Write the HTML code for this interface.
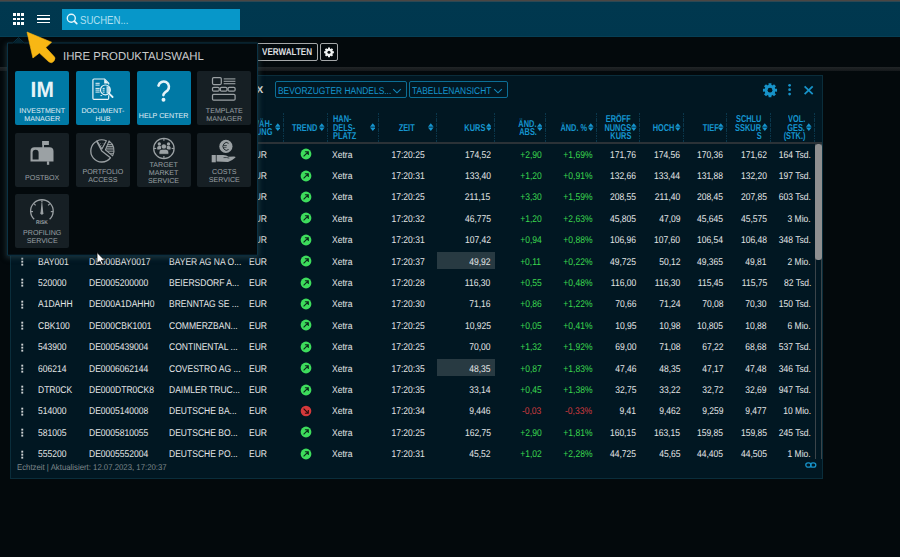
<!DOCTYPE html><html><head><meta charset="utf-8"><style>

html,body{margin:0;padding:0;}
body{width:900px;height:557px;overflow:hidden;position:relative;background:#03090c;font-family:"Liberation Sans",sans-serif;text-rendering:geometricPrecision;}
.ab{position:absolute;}
.t{position:absolute;white-space:nowrap;}
.s{display:inline-block;}
.row .t{color:#e4e6e7;font-size:9.8px;}
.hd{position:absolute;color:#1595cf;font-weight:bold;font-size:10px;white-space:nowrap;}
.tile{position:absolute;width:54px;height:54px;border-radius:2px;}
.tb{background:#0079a5;}
.tg{background:#161f24;}
.tl{position:absolute;left:0;width:54px;text-align:center;font-size:7.1px;line-height:7.8px;white-space:nowrap;}
.tb .tl{color:#e2f0f6;}
.tg .tl{color:#9ba1a4;}

</style></head><body>
<div class="ab" style="left:0;top:0;width:900px;height:37px;background:linear-gradient(#4a4643 0px,#4a4643 1px,#2c4854 1.5px,#00384f 2.5px,#00374e 100%);"></div>
<div class="ab" style="left:0;top:36px;width:900px;height:1px;background:#063f55;"></div>
<div class="ab" style="left:13.1px;top:13.3px;width:2.7px;height:2.6px;background:#fff;"></div>
<div class="ab" style="left:17.25px;top:13.3px;width:2.7px;height:2.6px;background:#fff;"></div>
<div class="ab" style="left:21.4px;top:13.3px;width:2.7px;height:2.6px;background:#fff;"></div>
<div class="ab" style="left:13.1px;top:17.65px;width:2.7px;height:2.6px;background:#fff;"></div>
<div class="ab" style="left:17.25px;top:17.65px;width:2.7px;height:2.6px;background:#fff;"></div>
<div class="ab" style="left:21.4px;top:17.65px;width:2.7px;height:2.6px;background:#fff;"></div>
<div class="ab" style="left:13.1px;top:22.0px;width:2.7px;height:2.6px;background:#fff;"></div>
<div class="ab" style="left:17.25px;top:22.0px;width:2.7px;height:2.6px;background:#fff;"></div>
<div class="ab" style="left:21.4px;top:22.0px;width:2.7px;height:2.6px;background:#fff;"></div>
<div class="ab" style="left:36.9px;top:14.9px;width:13.2px;height:1.55px;background:#fff;"></div>
<div class="ab" style="left:36.9px;top:18.4px;width:13.2px;height:1.55px;background:#fff;"></div>
<div class="ab" style="left:36.9px;top:21.9px;width:13.2px;height:1.55px;background:#fff;"></div>
<div class="ab" style="left:62px;top:9px;width:178px;height:21px;background:#0797c9;"></div>
<svg class="ab" style="left:65px;top:12px" width="14" height="14" viewBox="0 0 14 14"><circle cx="6.3" cy="6.2" r="4" fill="none" stroke="#e8f6fb" stroke-width="1.4"/><line x1="9.3" y1="9.2" x2="11.8" y2="11.7" stroke="#e8f6fb" stroke-width="1.7" stroke-linecap="round"/></svg>
<div class="t" style="left:80.4px;top:14.3px;font-size:11.6px;line-height:13px;color:#b0e0f2;"><span class="s" style="transform:scaleX(.825);transform-origin:left">SUCHEN...</span></div>
<div class="ab" style="left:0;top:66.5px;width:900px;height:4.5px;background:linear-gradient(#212527,#15191c);"></div>
<div class="ab" style="left:240px;top:43.3px;width:78.3px;height:17.5px;box-sizing:border-box;border:1.2px solid #a4a7a8;border-radius:2px;"></div>
<div class="t" style="left:262px;top:46.3px;font-size:10px;line-height:14px;font-weight:bold;color:#dcdfe0;"><span class="s" style="transform:scaleX(.81);transform-origin:left">VERWALTEN</span></div>
<div class="ab" style="left:320.3px;top:43.3px;width:17.5px;height:17.5px;box-sizing:border-box;border:1.2px solid #a4a7a8;border-radius:2px;"></div>
<svg class="ab" style="left:320.3px;top:43.3px" width="18" height="18" viewBox="0 0 18 18"><path d="M12.57,8.33 L13.90,8.30 L13.90,10.30 L12.57,10.27 L12.21,11.14 L13.17,12.06 L11.76,13.47 L10.84,12.51 L9.97,12.87 L10.00,14.20 L8.00,14.20 L8.03,12.87 L7.16,12.51 L6.24,13.47 L4.83,12.06 L5.79,11.14 L5.43,10.27 L4.10,10.30 L4.10,8.30 L5.43,8.33 L5.79,7.46 L4.83,6.54 L6.24,5.13 L7.16,6.09 L8.03,5.73 L8.00,4.40 L10.00,4.40 L9.97,5.73 L10.84,6.09 L11.76,5.13 L13.17,6.54 L12.21,7.46Z" fill="#f2f4f4"/><circle cx="9.0" cy="9.3" r="3.626" fill="#f2f4f4"/><circle cx="9.0" cy="9.3" r="1.55" fill="#03090c"/></svg>
<div class="ab" style="left:10px;top:75px;width:813px;height:404px;box-sizing:border-box;border:1px solid #0a2d3b;background:#011722;"></div>
<div class="t" style="left:242px;top:83.7px;font-size:10px;line-height:14px;font-weight:bold;color:#e9ecec;">DAX</div>
<div class="ab" style="left:275px;top:81.1px;width:131.7px;height:17.3px;box-sizing:border-box;border:1px solid #0c6e95;border-radius:2px;"></div>
<div class="t" style="left:278.1px;top:85.7px;font-size:9.8px;line-height:12px;color:#1595cf;"><span class="s" style="transform:scaleX(0.86);transform-origin:left">BEVORZUGTER HANDELS...</span></div>
<svg class="ab" style="left:392.2px;top:87px" width="10" height="8" viewBox="0 0 10 8"><polyline points="1.2,2.2 5,5.8 8.8,2.2" fill="none" stroke="#1288bd" stroke-width="1.15"/></svg>
<div class="ab" style="left:409.2px;top:81.1px;width:98.6px;height:17.3px;box-sizing:border-box;border:1px solid #0c6e95;border-radius:2px;"></div>
<div class="t" style="left:412.3px;top:85.7px;font-size:9.8px;line-height:12px;color:#1595cf;"><span class="s" style="transform:scaleX(0.86);transform-origin:left">TABELLENANSICHT</span></div>
<svg class="ab" style="left:493.29999999999995px;top:87px" width="10" height="8" viewBox="0 0 10 8"><polyline points="1.2,2.2 5,5.8 8.8,2.2" fill="none" stroke="#1288bd" stroke-width="1.15"/></svg>
<svg class="ab" style="left:760px;top:81px" width="20" height="18" viewBox="0 0 20 18"><path d="M15.21,7.78 L17.05,7.76 L17.05,10.64 L15.21,10.62 L14.69,11.88 L16.01,13.17 L13.97,15.21 L12.68,13.89 L11.42,14.41 L11.44,16.25 L8.56,16.25 L8.58,14.41 L7.32,13.89 L6.03,15.21 L3.99,13.17 L5.31,11.88 L4.79,10.62 L2.95,10.64 L2.95,7.76 L4.79,7.78 L5.31,6.52 L3.99,5.23 L6.03,3.19 L7.32,4.51 L8.58,3.99 L8.56,2.15 L11.44,2.15 L11.42,3.99 L12.68,4.51 L13.97,3.19 L16.01,5.23 L14.69,6.52Z" fill="#1793c9"/><circle cx="10" cy="9.2" r="5.292" fill="#1793c9"/><circle cx="10" cy="9.2" r="2.4" fill="#01161f"/></svg>
<svg class="ab" style="left:786px;top:82px" width="8" height="16" viewBox="0 0 8 16"><circle cx="3.6" cy="3.3" r="1.35" fill="#1793c9"/><circle cx="3.6" cy="7.7" r="1.35" fill="#1793c9"/><circle cx="3.6" cy="12.1" r="1.35" fill="#1793c9"/></svg>
<svg class="ab" style="left:803px;top:84.5px" width="12" height="11" viewBox="0 0 12 11"><line x1="1.6" y1="1.3" x2="9.7" y2="9.1" stroke="#1793c9" stroke-width="1.8"/><line x1="9.7" y1="1.3" x2="1.6" y2="9.1" stroke="#1793c9" stroke-width="1.8"/></svg>
<div class="ab" style="left:29.5px;top:112.5px;width:1px;height:30px;background:repeating-linear-gradient(#0a374c 0 1.5px,transparent 1.5px 2.5px);"></div>
<div class="ab" style="left:83.5px;top:112.5px;width:1px;height:30px;background:repeating-linear-gradient(#0a374c 0 1.5px,transparent 1.5px 2.5px);"></div>
<div class="ab" style="left:164.5px;top:112.5px;width:1px;height:30px;background:repeating-linear-gradient(#0a374c 0 1.5px,transparent 1.5px 2.5px);"></div>
<div class="ab" style="left:244.5px;top:112.5px;width:1px;height:30px;background:repeating-linear-gradient(#0a374c 0 1.5px,transparent 1.5px 2.5px);"></div>
<div class="ab" style="left:282.8px;top:112.5px;width:1px;height:30px;background:repeating-linear-gradient(#0a374c 0 1.5px,transparent 1.5px 2.5px);"></div>
<div class="ab" style="left:327.0px;top:112.5px;width:1px;height:30px;background:repeating-linear-gradient(#0a374c 0 1.5px,transparent 1.5px 2.5px);"></div>
<div class="ab" style="left:377.8px;top:112.5px;width:1px;height:30px;background:repeating-linear-gradient(#0a374c 0 1.5px,transparent 1.5px 2.5px);"></div>
<div class="ab" style="left:436.2px;top:112.5px;width:1px;height:30px;background:repeating-linear-gradient(#0a374c 0 1.5px,transparent 1.5px 2.5px);"></div>
<div class="ab" style="left:493.7px;top:112.5px;width:1px;height:30px;background:repeating-linear-gradient(#0a374c 0 1.5px,transparent 1.5px 2.5px);"></div>
<div class="ab" style="left:544.8px;top:112.5px;width:1px;height:30px;background:repeating-linear-gradient(#0a374c 0 1.5px,transparent 1.5px 2.5px);"></div>
<div class="ab" style="left:596.1px;top:112.5px;width:1px;height:30px;background:repeating-linear-gradient(#0a374c 0 1.5px,transparent 1.5px 2.5px);"></div>
<div class="ab" style="left:639.0px;top:112.5px;width:1px;height:30px;background:repeating-linear-gradient(#0a374c 0 1.5px,transparent 1.5px 2.5px);"></div>
<div class="ab" style="left:683.2px;top:112.5px;width:1px;height:30px;background:repeating-linear-gradient(#0a374c 0 1.5px,transparent 1.5px 2.5px);"></div>
<div class="ab" style="left:726.1px;top:112.5px;width:1px;height:30px;background:repeating-linear-gradient(#0a374c 0 1.5px,transparent 1.5px 2.5px);"></div>
<div class="ab" style="left:770.0px;top:112.5px;width:1px;height:30px;background:repeating-linear-gradient(#0a374c 0 1.5px,transparent 1.5px 2.5px);"></div>
<div class="ab" style="left:814.3px;top:112.5px;width:1px;height:30px;background:repeating-linear-gradient(#0a374c 0 1.5px,transparent 1.5px 2.5px);"></div>
<div class="ab" style="left:11px;top:142.2px;width:811px;height:1.8px;background:#2b3237;"></div>
<svg class="ab" style="left:274.8px;top:122.8px" width="5.6" height="8.4" viewBox="0 0 5.6 8.4"><polygon points="0,3.7 2.8,0.3 5.6,3.7" fill="#1595cf"/><polygon points="0,4.6 2.8,8 5.6,4.6" fill="#1595cf"/></svg>
<svg class="ab" style="left:319.0px;top:122.8px" width="5.6" height="8.4" viewBox="0 0 5.6 8.4"><polygon points="0,3.7 2.8,0.3 5.6,3.7" fill="#1595cf"/><polygon points="0,4.6 2.8,8 5.6,4.6" fill="#1595cf"/></svg>
<svg class="ab" style="left:369.8px;top:122.8px" width="5.6" height="8.4" viewBox="0 0 5.6 8.4"><polygon points="0,3.7 2.8,0.3 5.6,3.7" fill="#1595cf"/><polygon points="0,4.6 2.8,8 5.6,4.6" fill="#1595cf"/></svg>
<svg class="ab" style="left:428.2px;top:122.8px" width="5.6" height="8.4" viewBox="0 0 5.6 8.4"><polygon points="0,3.7 2.8,0.3 5.6,3.7" fill="#1595cf"/><polygon points="0,4.6 2.8,8 5.6,4.6" fill="#1595cf"/></svg>
<svg class="ab" style="left:485.7px;top:122.8px" width="5.6" height="8.4" viewBox="0 0 5.6 8.4"><polygon points="0,3.7 2.8,0.3 5.6,3.7" fill="#1595cf"/><polygon points="0,4.6 2.8,8 5.6,4.6" fill="#1595cf"/></svg>
<svg class="ab" style="left:536.8px;top:122.8px" width="5.6" height="8.4" viewBox="0 0 5.6 8.4"><polygon points="0,3.7 2.8,0.3 5.6,3.7" fill="#1595cf"/><polygon points="0,4.6 2.8,8 5.6,4.6" fill="#1595cf"/></svg>
<svg class="ab" style="left:588.1px;top:122.8px" width="5.6" height="8.4" viewBox="0 0 5.6 8.4"><polygon points="0,3.7 2.8,0.3 5.6,3.7" fill="#1595cf"/><polygon points="0,4.6 2.8,8 5.6,4.6" fill="#1595cf"/></svg>
<svg class="ab" style="left:631.0px;top:122.8px" width="5.6" height="8.4" viewBox="0 0 5.6 8.4"><polygon points="0,3.7 2.8,0.3 5.6,3.7" fill="#1595cf"/><polygon points="0,4.6 2.8,8 5.6,4.6" fill="#1595cf"/></svg>
<svg class="ab" style="left:675.2px;top:122.8px" width="5.6" height="8.4" viewBox="0 0 5.6 8.4"><polygon points="0,3.7 2.8,0.3 5.6,3.7" fill="#1595cf"/><polygon points="0,4.6 2.8,8 5.6,4.6" fill="#1595cf"/></svg>
<svg class="ab" style="left:718.1px;top:122.8px" width="5.6" height="8.4" viewBox="0 0 5.6 8.4"><polygon points="0,3.7 2.8,0.3 5.6,3.7" fill="#1595cf"/><polygon points="0,4.6 2.8,8 5.6,4.6" fill="#1595cf"/></svg>
<svg class="ab" style="left:762.0px;top:122.8px" width="5.6" height="8.4" viewBox="0 0 5.6 8.4"><polygon points="0,3.7 2.8,0.3 5.6,3.7" fill="#1595cf"/><polygon points="0,4.6 2.8,8 5.6,4.6" fill="#1595cf"/></svg>
<svg class="ab" style="left:806.3px;top:122.8px" width="5.6" height="8.4" viewBox="0 0 5.6 8.4"><polygon points="0,3.7 2.8,0.3 5.6,3.7" fill="#1595cf"/><polygon points="0,4.6 2.8,8 5.6,4.6" fill="#1595cf"/></svg>
<div class="hd" style="left:38px;top:122.85px;line-height:12px;"><span class="s" style="transform:scaleX(0.74);transform-origin:left">SYMBOL</span></div>
<div class="hd" style="left:88.7px;top:122.85px;line-height:12px;"><span class="s" style="transform:scaleX(0.74);transform-origin:left">ISIN</span></div>
<div class="hd" style="left:169px;top:122.85px;line-height:12px;"><span class="s" style="transform:scaleX(0.74);transform-origin:left">NAME</span></div>
<div class="hd" style="left:72.20000000000002px;width:200px;text-align:right;top:118.55px;line-height:12px;"><span class="s" style="transform:scaleX(0.74);transform-origin:right">WÄH-</span></div>
<div class="hd" style="left:72.20000000000002px;width:200px;text-align:right;top:127.14999999999999px;line-height:12px;"><span class="s" style="transform:scaleX(0.74);transform-origin:right">RUNG</span></div>
<div class="hd" style="left:117.20000000000002px;width:200px;text-align:right;top:122.85px;line-height:12px;"><span class="s" style="transform:scaleX(0.74);transform-origin:right">TREND</span></div>
<div class="hd" style="left:332.5px;top:114.25px;line-height:12px;"><span class="s" style="transform:scaleX(0.74);transform-origin:left">HAN-</span></div>
<div class="hd" style="left:332.5px;top:122.85px;line-height:12px;"><span class="s" style="transform:scaleX(0.74);transform-origin:left">DELS-</span></div>
<div class="hd" style="left:332.5px;top:131.45000000000002px;line-height:12px;"><span class="s" style="transform:scaleX(0.74);transform-origin:left">PLATZ</span></div>
<div class="hd" style="left:214.70000000000002px;width:200px;text-align:right;top:122.85px;line-height:12px;"><span class="s" style="transform:scaleX(0.74);transform-origin:right">ZEIT</span></div>
<div class="hd" style="left:285.1px;width:200px;text-align:right;top:122.85px;line-height:12px;"><span class="s" style="transform:scaleX(0.74);transform-origin:right">KURS</span></div>
<div class="hd" style="left:336.79999999999995px;width:200px;text-align:right;top:118.55px;line-height:12px;"><span class="s" style="transform:scaleX(0.74);transform-origin:right">ÄND.</span></div>
<div class="hd" style="left:336.79999999999995px;width:200px;text-align:right;top:127.14999999999999px;line-height:12px;"><span class="s" style="transform:scaleX(0.74);transform-origin:right">ABS.</span></div>
<div class="hd" style="left:387.4px;width:200px;text-align:right;top:122.85px;line-height:12px;"><span class="s" style="transform:scaleX(0.74);transform-origin:right">ÄND. %</span></div>
<div class="hd" style="left:431.0px;width:200px;text-align:right;top:114.25px;line-height:12px;"><span class="s" style="transform:scaleX(0.74);transform-origin:right">ERÖFF</span></div>
<div class="hd" style="left:431.0px;width:200px;text-align:right;top:122.85px;line-height:12px;"><span class="s" style="transform:scaleX(0.74);transform-origin:right">NUNGS</span></div>
<div class="hd" style="left:431.0px;width:200px;text-align:right;top:131.45000000000002px;line-height:12px;"><span class="s" style="transform:scaleX(0.74);transform-origin:right">KURS</span></div>
<div class="hd" style="left:474.5px;width:200px;text-align:right;top:122.85px;line-height:12px;"><span class="s" style="transform:scaleX(0.74);transform-origin:right">HOCH</span></div>
<div class="hd" style="left:518.4px;width:200px;text-align:right;top:122.85px;line-height:12px;"><span class="s" style="transform:scaleX(0.74);transform-origin:right">TIEF</span></div>
<div class="hd" style="left:561.4px;width:200px;text-align:right;top:114.25px;line-height:12px;"><span class="s" style="transform:scaleX(0.74);transform-origin:right">SCHLU</span></div>
<div class="hd" style="left:561.4px;width:200px;text-align:right;top:122.85px;line-height:12px;"><span class="s" style="transform:scaleX(0.74);transform-origin:right">SSKUR</span></div>
<div class="hd" style="left:561.4px;width:200px;text-align:right;top:131.45000000000002px;line-height:12px;"><span class="s" style="transform:scaleX(0.74);transform-origin:right">S</span></div>
<div class="hd" style="left:605.0px;width:200px;text-align:right;top:114.25px;line-height:12px;"><span class="s" style="transform:scaleX(0.74);transform-origin:right">VOL.</span></div>
<div class="hd" style="left:605.0px;width:200px;text-align:right;top:122.85px;line-height:12px;"><span class="s" style="transform:scaleX(0.74);transform-origin:right">GES.</span></div>
<div class="hd" style="left:605.0px;width:200px;text-align:right;top:131.45000000000002px;line-height:12px;"><span class="s" style="transform:scaleX(0.74);transform-origin:right">(STK.)</span></div>
<div class="ab row" style="left:11px;top:144px;width:804px;height:315.5px;overflow:hidden;">
<svg class="ab" style="left:10px;top:6px" width="4" height="9" viewBox="0 0 4 9"><rect x="0.3" y="0.7" width="1.9" height="1.9" fill="#cfd3d4"/><rect x="0.3" y="3.7" width="1.9" height="1.9" fill="#cfd3d4"/><rect x="0.3" y="6.7" width="1.9" height="1.9" fill="#cfd3d4"/></svg>
<div class="t" style="left:27px;top:0.5999999999999943px;line-height:21.4px;font-size:9.8px;"><span class="s" style="transform:scaleX(0.87);transform-origin:left">A1EWWW</span></div>
<div class="t" style="left:77.7px;top:0.5999999999999943px;line-height:21.4px;font-size:9.8px;"><span class="s" style="transform:scaleX(0.87);transform-origin:left">DE000A1EWWW0</span></div>
<div class="t" style="left:158px;top:0.5999999999999943px;line-height:21.4px;font-size:9.8px;"><span class="s" style="transform:scaleX(0.87);transform-origin:left">ADIDAS AG NA O...</span></div>
<div class="t" style="left:238px;top:0.5999999999999943px;line-height:21.4px;font-size:9.8px;"><span class="s" style="transform:scaleX(0.87);transform-origin:left">EUR</span></div>
<svg class="ab" style="left:289.2px;top:4.099999999999994px" width="12" height="12" viewBox="0 0 12 12"><circle cx="6" cy="6" r="5.4" fill="#3ddc5c"/><path d="M3.6,8.4 L8,4 M4.9,3.7 L8.3,3.7 L8.3,7.1" fill="none" stroke="#0b2a1a" stroke-width="1.1"/></svg>
<div class="t" style="left:321.2px;top:0.5999999999999943px;line-height:21.4px;font-size:9.8px;"><span class="s" style="transform:scaleX(0.87);transform-origin:left">Xetra</span></div>
<div class="t" style="left:321.8px;width:150px;text-align:center;top:0.5999999999999943px;line-height:21.4px;font-size:9.8px;"><span class="s" style="transform:scaleX(0.87);transform-origin:center">17:20:25</span></div>
<div class="t" style="left:329.6px;width:150px;text-align:right;top:0.5999999999999943px;line-height:21.4px;font-size:9.8px;"><span class="s" style="transform:scaleX(0.87);transform-origin:right">174,52</span></div>
<div class="t" style="left:380.4px;width:150px;text-align:right;top:0.5999999999999943px;line-height:21.4px;font-size:9.8px;color:#3bd94f;"><span class="s" style="transform:scaleX(0.87);transform-origin:right">+2,90</span></div>
<div class="t" style="left:431.1px;width:150px;text-align:right;top:0.5999999999999943px;line-height:21.4px;font-size:9.8px;color:#3bd94f;"><span class="s" style="transform:scaleX(0.87);transform-origin:right">+1,69%</span></div>
<div class="t" style="left:475.1px;width:150px;text-align:right;top:0.5999999999999943px;line-height:21.4px;font-size:9.8px;"><span class="s" style="transform:scaleX(0.87);transform-origin:right">171,76</span></div>
<div class="t" style="left:519.1px;width:150px;text-align:right;top:0.5999999999999943px;line-height:21.4px;font-size:9.8px;"><span class="s" style="transform:scaleX(0.87);transform-origin:right">174,56</span></div>
<div class="t" style="left:562.4px;width:150px;text-align:right;top:0.5999999999999943px;line-height:21.4px;font-size:9.8px;"><span class="s" style="transform:scaleX(0.87);transform-origin:right">170,36</span></div>
<div class="t" style="left:606.0px;width:150px;text-align:right;top:0.5999999999999943px;line-height:21.4px;font-size:9.8px;"><span class="s" style="transform:scaleX(0.87);transform-origin:right">171,62</span></div>
<div class="t" style="left:650.0px;width:150px;text-align:right;top:0.5999999999999943px;line-height:21.4px;font-size:9.8px;"><span class="s" style="transform:scaleX(0.87);transform-origin:right">164 Tsd.</span></div>
<svg class="ab" style="left:10px;top:27px" width="4" height="9" viewBox="0 0 4 9"><rect x="0.3" y="0.7" width="1.9" height="1.9" fill="#cfd3d4"/><rect x="0.3" y="3.7" width="1.9" height="1.9" fill="#cfd3d4"/><rect x="0.3" y="6.7" width="1.9" height="1.9" fill="#cfd3d4"/></svg>
<div class="t" style="left:27px;top:22.0px;line-height:21.4px;font-size:9.8px;"><span class="s" style="transform:scaleX(0.87);transform-origin:left">938914</span></div>
<div class="t" style="left:77.7px;top:22.0px;line-height:21.4px;font-size:9.8px;"><span class="s" style="transform:scaleX(0.87);transform-origin:left">NL0000235190</span></div>
<div class="t" style="left:158px;top:22.0px;line-height:21.4px;font-size:9.8px;"><span class="s" style="transform:scaleX(0.87);transform-origin:left">AIRBUS SE ...</span></div>
<div class="t" style="left:238px;top:22.0px;line-height:21.4px;font-size:9.8px;"><span class="s" style="transform:scaleX(0.87);transform-origin:left">EUR</span></div>
<svg class="ab" style="left:289.2px;top:25.5px" width="12" height="12" viewBox="0 0 12 12"><circle cx="6" cy="6" r="5.4" fill="#3ddc5c"/><path d="M3.6,8.4 L8,4 M4.9,3.7 L8.3,3.7 L8.3,7.1" fill="none" stroke="#0b2a1a" stroke-width="1.1"/></svg>
<div class="t" style="left:321.2px;top:22.0px;line-height:21.4px;font-size:9.8px;"><span class="s" style="transform:scaleX(0.87);transform-origin:left">Xetra</span></div>
<div class="t" style="left:321.8px;width:150px;text-align:center;top:22.0px;line-height:21.4px;font-size:9.8px;"><span class="s" style="transform:scaleX(0.87);transform-origin:center">17:20:31</span></div>
<div class="t" style="left:329.6px;width:150px;text-align:right;top:22.0px;line-height:21.4px;font-size:9.8px;"><span class="s" style="transform:scaleX(0.87);transform-origin:right">133,40</span></div>
<div class="t" style="left:380.4px;width:150px;text-align:right;top:22.0px;line-height:21.4px;font-size:9.8px;color:#3bd94f;"><span class="s" style="transform:scaleX(0.87);transform-origin:right">+1,20</span></div>
<div class="t" style="left:431.1px;width:150px;text-align:right;top:22.0px;line-height:21.4px;font-size:9.8px;color:#3bd94f;"><span class="s" style="transform:scaleX(0.87);transform-origin:right">+0,91%</span></div>
<div class="t" style="left:475.1px;width:150px;text-align:right;top:22.0px;line-height:21.4px;font-size:9.8px;"><span class="s" style="transform:scaleX(0.87);transform-origin:right">132,66</span></div>
<div class="t" style="left:519.1px;width:150px;text-align:right;top:22.0px;line-height:21.4px;font-size:9.8px;"><span class="s" style="transform:scaleX(0.87);transform-origin:right">133,44</span></div>
<div class="t" style="left:562.4px;width:150px;text-align:right;top:22.0px;line-height:21.4px;font-size:9.8px;"><span class="s" style="transform:scaleX(0.87);transform-origin:right">131,88</span></div>
<div class="t" style="left:606.0px;width:150px;text-align:right;top:22.0px;line-height:21.4px;font-size:9.8px;"><span class="s" style="transform:scaleX(0.87);transform-origin:right">132,20</span></div>
<div class="t" style="left:650.0px;width:150px;text-align:right;top:22.0px;line-height:21.4px;font-size:9.8px;"><span class="s" style="transform:scaleX(0.87);transform-origin:right">197 Tsd.</span></div>
<svg class="ab" style="left:10px;top:49px" width="4" height="9" viewBox="0 0 4 9"><rect x="0.3" y="0.7" width="1.9" height="1.9" fill="#cfd3d4"/><rect x="0.3" y="3.7" width="1.9" height="1.9" fill="#cfd3d4"/><rect x="0.3" y="6.7" width="1.9" height="1.9" fill="#cfd3d4"/></svg>
<div class="t" style="left:27px;top:43.39999999999998px;line-height:21.4px;font-size:9.8px;"><span class="s" style="transform:scaleX(0.87);transform-origin:left">840400</span></div>
<div class="t" style="left:77.7px;top:43.39999999999998px;line-height:21.4px;font-size:9.8px;"><span class="s" style="transform:scaleX(0.87);transform-origin:left">DE0008404005</span></div>
<div class="t" style="left:158px;top:43.39999999999998px;line-height:21.4px;font-size:9.8px;"><span class="s" style="transform:scaleX(0.87);transform-origin:left">ALLIANZ SE ...</span></div>
<div class="t" style="left:238px;top:43.39999999999998px;line-height:21.4px;font-size:9.8px;"><span class="s" style="transform:scaleX(0.87);transform-origin:left">EUR</span></div>
<svg class="ab" style="left:289.2px;top:46.89999999999998px" width="12" height="12" viewBox="0 0 12 12"><circle cx="6" cy="6" r="5.4" fill="#3ddc5c"/><path d="M3.6,8.4 L8,4 M4.9,3.7 L8.3,3.7 L8.3,7.1" fill="none" stroke="#0b2a1a" stroke-width="1.1"/></svg>
<div class="t" style="left:321.2px;top:43.39999999999998px;line-height:21.4px;font-size:9.8px;"><span class="s" style="transform:scaleX(0.87);transform-origin:left">Xetra</span></div>
<div class="t" style="left:321.8px;width:150px;text-align:center;top:43.39999999999998px;line-height:21.4px;font-size:9.8px;"><span class="s" style="transform:scaleX(0.87);transform-origin:center">17:20:25</span></div>
<div class="t" style="left:329.6px;width:150px;text-align:right;top:43.39999999999998px;line-height:21.4px;font-size:9.8px;"><span class="s" style="transform:scaleX(0.87);transform-origin:right">211,15</span></div>
<div class="t" style="left:380.4px;width:150px;text-align:right;top:43.39999999999998px;line-height:21.4px;font-size:9.8px;color:#3bd94f;"><span class="s" style="transform:scaleX(0.87);transform-origin:right">+3,30</span></div>
<div class="t" style="left:431.1px;width:150px;text-align:right;top:43.39999999999998px;line-height:21.4px;font-size:9.8px;color:#3bd94f;"><span class="s" style="transform:scaleX(0.87);transform-origin:right">+1,59%</span></div>
<div class="t" style="left:475.1px;width:150px;text-align:right;top:43.39999999999998px;line-height:21.4px;font-size:9.8px;"><span class="s" style="transform:scaleX(0.87);transform-origin:right">208,55</span></div>
<div class="t" style="left:519.1px;width:150px;text-align:right;top:43.39999999999998px;line-height:21.4px;font-size:9.8px;"><span class="s" style="transform:scaleX(0.87);transform-origin:right">211,40</span></div>
<div class="t" style="left:562.4px;width:150px;text-align:right;top:43.39999999999998px;line-height:21.4px;font-size:9.8px;"><span class="s" style="transform:scaleX(0.87);transform-origin:right">208,45</span></div>
<div class="t" style="left:606.0px;width:150px;text-align:right;top:43.39999999999998px;line-height:21.4px;font-size:9.8px;"><span class="s" style="transform:scaleX(0.87);transform-origin:right">207,85</span></div>
<div class="t" style="left:650.0px;width:150px;text-align:right;top:43.39999999999998px;line-height:21.4px;font-size:9.8px;"><span class="s" style="transform:scaleX(0.87);transform-origin:right">603 Tsd.</span></div>
<svg class="ab" style="left:10px;top:70px" width="4" height="9" viewBox="0 0 4 9"><rect x="0.3" y="0.7" width="1.9" height="1.9" fill="#cfd3d4"/><rect x="0.3" y="3.7" width="1.9" height="1.9" fill="#cfd3d4"/><rect x="0.3" y="6.7" width="1.9" height="1.9" fill="#cfd3d4"/></svg>
<div class="t" style="left:27px;top:64.79999999999998px;line-height:21.4px;font-size:9.8px;"><span class="s" style="transform:scaleX(0.87);transform-origin:left">BASF11</span></div>
<div class="t" style="left:77.7px;top:64.79999999999998px;line-height:21.4px;font-size:9.8px;"><span class="s" style="transform:scaleX(0.87);transform-origin:left">DE000BASF111</span></div>
<div class="t" style="left:158px;top:64.79999999999998px;line-height:21.4px;font-size:9.8px;"><span class="s" style="transform:scaleX(0.87);transform-origin:left">BASF SE NA O.N.</span></div>
<div class="t" style="left:238px;top:64.79999999999998px;line-height:21.4px;font-size:9.8px;"><span class="s" style="transform:scaleX(0.87);transform-origin:left">EUR</span></div>
<svg class="ab" style="left:289.2px;top:68.29999999999998px" width="12" height="12" viewBox="0 0 12 12"><circle cx="6" cy="6" r="5.4" fill="#3ddc5c"/><path d="M3.6,8.4 L8,4 M4.9,3.7 L8.3,3.7 L8.3,7.1" fill="none" stroke="#0b2a1a" stroke-width="1.1"/></svg>
<div class="t" style="left:321.2px;top:64.79999999999998px;line-height:21.4px;font-size:9.8px;"><span class="s" style="transform:scaleX(0.87);transform-origin:left">Xetra</span></div>
<div class="t" style="left:321.8px;width:150px;text-align:center;top:64.79999999999998px;line-height:21.4px;font-size:9.8px;"><span class="s" style="transform:scaleX(0.87);transform-origin:center">17:20:32</span></div>
<div class="t" style="left:329.6px;width:150px;text-align:right;top:64.79999999999998px;line-height:21.4px;font-size:9.8px;"><span class="s" style="transform:scaleX(0.87);transform-origin:right">46,775</span></div>
<div class="t" style="left:380.4px;width:150px;text-align:right;top:64.79999999999998px;line-height:21.4px;font-size:9.8px;color:#3bd94f;"><span class="s" style="transform:scaleX(0.87);transform-origin:right">+1,20</span></div>
<div class="t" style="left:431.1px;width:150px;text-align:right;top:64.79999999999998px;line-height:21.4px;font-size:9.8px;color:#3bd94f;"><span class="s" style="transform:scaleX(0.87);transform-origin:right">+2,63%</span></div>
<div class="t" style="left:475.1px;width:150px;text-align:right;top:64.79999999999998px;line-height:21.4px;font-size:9.8px;"><span class="s" style="transform:scaleX(0.87);transform-origin:right">45,805</span></div>
<div class="t" style="left:519.1px;width:150px;text-align:right;top:64.79999999999998px;line-height:21.4px;font-size:9.8px;"><span class="s" style="transform:scaleX(0.87);transform-origin:right">47,09</span></div>
<div class="t" style="left:562.4px;width:150px;text-align:right;top:64.79999999999998px;line-height:21.4px;font-size:9.8px;"><span class="s" style="transform:scaleX(0.87);transform-origin:right">45,645</span></div>
<div class="t" style="left:606.0px;width:150px;text-align:right;top:64.79999999999998px;line-height:21.4px;font-size:9.8px;"><span class="s" style="transform:scaleX(0.87);transform-origin:right">45,575</span></div>
<div class="t" style="left:650.0px;width:150px;text-align:right;top:64.79999999999998px;line-height:21.4px;font-size:9.8px;"><span class="s" style="transform:scaleX(0.87);transform-origin:right">3 Mio.</span></div>
<svg class="ab" style="left:10px;top:92px" width="4" height="9" viewBox="0 0 4 9"><rect x="0.3" y="0.7" width="1.9" height="1.9" fill="#cfd3d4"/><rect x="0.3" y="3.7" width="1.9" height="1.9" fill="#cfd3d4"/><rect x="0.3" y="6.7" width="1.9" height="1.9" fill="#cfd3d4"/></svg>
<div class="t" style="left:27px;top:86.19999999999999px;line-height:21.4px;font-size:9.8px;"><span class="s" style="transform:scaleX(0.87);transform-origin:left">519000</span></div>
<div class="t" style="left:77.7px;top:86.19999999999999px;line-height:21.4px;font-size:9.8px;"><span class="s" style="transform:scaleX(0.87);transform-origin:left">DE0005190003</span></div>
<div class="t" style="left:158px;top:86.19999999999999px;line-height:21.4px;font-size:9.8px;"><span class="s" style="transform:scaleX(0.87);transform-origin:left">BAY.MOTOREN ...</span></div>
<div class="t" style="left:238px;top:86.19999999999999px;line-height:21.4px;font-size:9.8px;"><span class="s" style="transform:scaleX(0.87);transform-origin:left">EUR</span></div>
<svg class="ab" style="left:289.2px;top:89.69999999999999px" width="12" height="12" viewBox="0 0 12 12"><circle cx="6" cy="6" r="5.4" fill="#3ddc5c"/><path d="M3.6,8.4 L8,4 M4.9,3.7 L8.3,3.7 L8.3,7.1" fill="none" stroke="#0b2a1a" stroke-width="1.1"/></svg>
<div class="t" style="left:321.2px;top:86.19999999999999px;line-height:21.4px;font-size:9.8px;"><span class="s" style="transform:scaleX(0.87);transform-origin:left">Xetra</span></div>
<div class="t" style="left:321.8px;width:150px;text-align:center;top:86.19999999999999px;line-height:21.4px;font-size:9.8px;"><span class="s" style="transform:scaleX(0.87);transform-origin:center">17:20:31</span></div>
<div class="t" style="left:329.6px;width:150px;text-align:right;top:86.19999999999999px;line-height:21.4px;font-size:9.8px;"><span class="s" style="transform:scaleX(0.87);transform-origin:right">107,42</span></div>
<div class="t" style="left:380.4px;width:150px;text-align:right;top:86.19999999999999px;line-height:21.4px;font-size:9.8px;color:#3bd94f;"><span class="s" style="transform:scaleX(0.87);transform-origin:right">+0,94</span></div>
<div class="t" style="left:431.1px;width:150px;text-align:right;top:86.19999999999999px;line-height:21.4px;font-size:9.8px;color:#3bd94f;"><span class="s" style="transform:scaleX(0.87);transform-origin:right">+0,88%</span></div>
<div class="t" style="left:475.1px;width:150px;text-align:right;top:86.19999999999999px;line-height:21.4px;font-size:9.8px;"><span class="s" style="transform:scaleX(0.87);transform-origin:right">106,96</span></div>
<div class="t" style="left:519.1px;width:150px;text-align:right;top:86.19999999999999px;line-height:21.4px;font-size:9.8px;"><span class="s" style="transform:scaleX(0.87);transform-origin:right">107,60</span></div>
<div class="t" style="left:562.4px;width:150px;text-align:right;top:86.19999999999999px;line-height:21.4px;font-size:9.8px;"><span class="s" style="transform:scaleX(0.87);transform-origin:right">106,54</span></div>
<div class="t" style="left:606.0px;width:150px;text-align:right;top:86.19999999999999px;line-height:21.4px;font-size:9.8px;"><span class="s" style="transform:scaleX(0.87);transform-origin:right">106,48</span></div>
<div class="t" style="left:650.0px;width:150px;text-align:right;top:86.19999999999999px;line-height:21.4px;font-size:9.8px;"><span class="s" style="transform:scaleX(0.87);transform-origin:right">348 Tsd.</span></div>
<div class="ab" style="left:425.7px;top:108.4px;width:58px;height:17px;background:#283a42;"></div>
<svg class="ab" style="left:10px;top:113px" width="4" height="9" viewBox="0 0 4 9"><rect x="0.3" y="0.7" width="1.9" height="1.9" fill="#cfd3d4"/><rect x="0.3" y="3.7" width="1.9" height="1.9" fill="#cfd3d4"/><rect x="0.3" y="6.7" width="1.9" height="1.9" fill="#cfd3d4"/></svg>
<div class="t" style="left:27px;top:107.6px;line-height:21.4px;font-size:9.8px;"><span class="s" style="transform:scaleX(0.87);transform-origin:left">BAY001</span></div>
<div class="t" style="left:77.7px;top:107.6px;line-height:21.4px;font-size:9.8px;"><span class="s" style="transform:scaleX(0.87);transform-origin:left">DE000BAY0017</span></div>
<div class="t" style="left:158px;top:107.6px;line-height:21.4px;font-size:9.8px;"><span class="s" style="transform:scaleX(0.87);transform-origin:left">BAYER AG NA O...</span></div>
<div class="t" style="left:238px;top:107.6px;line-height:21.4px;font-size:9.8px;"><span class="s" style="transform:scaleX(0.87);transform-origin:left">EUR</span></div>
<svg class="ab" style="left:289.2px;top:111.10000000000002px" width="12" height="12" viewBox="0 0 12 12"><circle cx="6" cy="6" r="5.4" fill="#3ddc5c"/><path d="M3.6,8.4 L8,4 M4.9,3.7 L8.3,3.7 L8.3,7.1" fill="none" stroke="#0b2a1a" stroke-width="1.1"/></svg>
<div class="t" style="left:321.2px;top:107.6px;line-height:21.4px;font-size:9.8px;"><span class="s" style="transform:scaleX(0.87);transform-origin:left">Xetra</span></div>
<div class="t" style="left:321.8px;width:150px;text-align:center;top:107.6px;line-height:21.4px;font-size:9.8px;"><span class="s" style="transform:scaleX(0.87);transform-origin:center">17:20:37</span></div>
<div class="t" style="left:329.6px;width:150px;text-align:right;top:107.6px;line-height:21.4px;font-size:9.8px;"><span class="s" style="transform:scaleX(0.87);transform-origin:right">49,92</span></div>
<div class="t" style="left:380.4px;width:150px;text-align:right;top:107.6px;line-height:21.4px;font-size:9.8px;color:#3bd94f;"><span class="s" style="transform:scaleX(0.87);transform-origin:right">+0,11</span></div>
<div class="t" style="left:431.1px;width:150px;text-align:right;top:107.6px;line-height:21.4px;font-size:9.8px;color:#3bd94f;"><span class="s" style="transform:scaleX(0.87);transform-origin:right">+0,22%</span></div>
<div class="t" style="left:475.1px;width:150px;text-align:right;top:107.6px;line-height:21.4px;font-size:9.8px;"><span class="s" style="transform:scaleX(0.87);transform-origin:right">49,725</span></div>
<div class="t" style="left:519.1px;width:150px;text-align:right;top:107.6px;line-height:21.4px;font-size:9.8px;"><span class="s" style="transform:scaleX(0.87);transform-origin:right">50,12</span></div>
<div class="t" style="left:562.4px;width:150px;text-align:right;top:107.6px;line-height:21.4px;font-size:9.8px;"><span class="s" style="transform:scaleX(0.87);transform-origin:right">49,365</span></div>
<div class="t" style="left:606.0px;width:150px;text-align:right;top:107.6px;line-height:21.4px;font-size:9.8px;"><span class="s" style="transform:scaleX(0.87);transform-origin:right">49,81</span></div>
<div class="t" style="left:650.0px;width:150px;text-align:right;top:107.6px;line-height:21.4px;font-size:9.8px;"><span class="s" style="transform:scaleX(0.87);transform-origin:right">2 Mio.</span></div>
<svg class="ab" style="left:10px;top:134px" width="4" height="9" viewBox="0 0 4 9"><rect x="0.3" y="0.7" width="1.9" height="1.9" fill="#cfd3d4"/><rect x="0.3" y="3.7" width="1.9" height="1.9" fill="#cfd3d4"/><rect x="0.3" y="6.7" width="1.9" height="1.9" fill="#cfd3d4"/></svg>
<div class="t" style="left:27px;top:129.0px;line-height:21.4px;font-size:9.8px;"><span class="s" style="transform:scaleX(0.87);transform-origin:left">520000</span></div>
<div class="t" style="left:77.7px;top:129.0px;line-height:21.4px;font-size:9.8px;"><span class="s" style="transform:scaleX(0.87);transform-origin:left">DE0005200000</span></div>
<div class="t" style="left:158px;top:129.0px;line-height:21.4px;font-size:9.8px;"><span class="s" style="transform:scaleX(0.87);transform-origin:left">BEIERSDORF A...</span></div>
<div class="t" style="left:238px;top:129.0px;line-height:21.4px;font-size:9.8px;"><span class="s" style="transform:scaleX(0.87);transform-origin:left">EUR</span></div>
<svg class="ab" style="left:289.2px;top:132.5px" width="12" height="12" viewBox="0 0 12 12"><circle cx="6" cy="6" r="5.4" fill="#3ddc5c"/><path d="M3.6,8.4 L8,4 M4.9,3.7 L8.3,3.7 L8.3,7.1" fill="none" stroke="#0b2a1a" stroke-width="1.1"/></svg>
<div class="t" style="left:321.2px;top:129.0px;line-height:21.4px;font-size:9.8px;"><span class="s" style="transform:scaleX(0.87);transform-origin:left">Xetra</span></div>
<div class="t" style="left:321.8px;width:150px;text-align:center;top:129.0px;line-height:21.4px;font-size:9.8px;"><span class="s" style="transform:scaleX(0.87);transform-origin:center">17:20:28</span></div>
<div class="t" style="left:329.6px;width:150px;text-align:right;top:129.0px;line-height:21.4px;font-size:9.8px;"><span class="s" style="transform:scaleX(0.87);transform-origin:right">116,30</span></div>
<div class="t" style="left:380.4px;width:150px;text-align:right;top:129.0px;line-height:21.4px;font-size:9.8px;color:#3bd94f;"><span class="s" style="transform:scaleX(0.87);transform-origin:right">+0,55</span></div>
<div class="t" style="left:431.1px;width:150px;text-align:right;top:129.0px;line-height:21.4px;font-size:9.8px;color:#3bd94f;"><span class="s" style="transform:scaleX(0.87);transform-origin:right">+0,48%</span></div>
<div class="t" style="left:475.1px;width:150px;text-align:right;top:129.0px;line-height:21.4px;font-size:9.8px;"><span class="s" style="transform:scaleX(0.87);transform-origin:right">116,00</span></div>
<div class="t" style="left:519.1px;width:150px;text-align:right;top:129.0px;line-height:21.4px;font-size:9.8px;"><span class="s" style="transform:scaleX(0.87);transform-origin:right">116,30</span></div>
<div class="t" style="left:562.4px;width:150px;text-align:right;top:129.0px;line-height:21.4px;font-size:9.8px;"><span class="s" style="transform:scaleX(0.87);transform-origin:right">115,45</span></div>
<div class="t" style="left:606.0px;width:150px;text-align:right;top:129.0px;line-height:21.4px;font-size:9.8px;"><span class="s" style="transform:scaleX(0.87);transform-origin:right">115,75</span></div>
<div class="t" style="left:650.0px;width:150px;text-align:right;top:129.0px;line-height:21.4px;font-size:9.8px;"><span class="s" style="transform:scaleX(0.87);transform-origin:right">82 Tsd.</span></div>
<svg class="ab" style="left:10px;top:156px" width="4" height="9" viewBox="0 0 4 9"><rect x="0.3" y="0.7" width="1.9" height="1.9" fill="#cfd3d4"/><rect x="0.3" y="3.7" width="1.9" height="1.9" fill="#cfd3d4"/><rect x="0.3" y="6.7" width="1.9" height="1.9" fill="#cfd3d4"/></svg>
<div class="t" style="left:27px;top:150.39999999999998px;line-height:21.4px;font-size:9.8px;"><span class="s" style="transform:scaleX(0.87);transform-origin:left">A1DAHH</span></div>
<div class="t" style="left:77.7px;top:150.39999999999998px;line-height:21.4px;font-size:9.8px;"><span class="s" style="transform:scaleX(0.87);transform-origin:left">DE000A1DAHH0</span></div>
<div class="t" style="left:158px;top:150.39999999999998px;line-height:21.4px;font-size:9.8px;"><span class="s" style="transform:scaleX(0.87);transform-origin:left">BRENNTAG SE ...</span></div>
<div class="t" style="left:238px;top:150.39999999999998px;line-height:21.4px;font-size:9.8px;"><span class="s" style="transform:scaleX(0.87);transform-origin:left">EUR</span></div>
<svg class="ab" style="left:289.2px;top:153.89999999999998px" width="12" height="12" viewBox="0 0 12 12"><circle cx="6" cy="6" r="5.4" fill="#3ddc5c"/><path d="M3.6,8.4 L8,4 M4.9,3.7 L8.3,3.7 L8.3,7.1" fill="none" stroke="#0b2a1a" stroke-width="1.1"/></svg>
<div class="t" style="left:321.2px;top:150.39999999999998px;line-height:21.4px;font-size:9.8px;"><span class="s" style="transform:scaleX(0.87);transform-origin:left">Xetra</span></div>
<div class="t" style="left:321.8px;width:150px;text-align:center;top:150.39999999999998px;line-height:21.4px;font-size:9.8px;"><span class="s" style="transform:scaleX(0.87);transform-origin:center">17:20:30</span></div>
<div class="t" style="left:329.6px;width:150px;text-align:right;top:150.39999999999998px;line-height:21.4px;font-size:9.8px;"><span class="s" style="transform:scaleX(0.87);transform-origin:right">71,16</span></div>
<div class="t" style="left:380.4px;width:150px;text-align:right;top:150.39999999999998px;line-height:21.4px;font-size:9.8px;color:#3bd94f;"><span class="s" style="transform:scaleX(0.87);transform-origin:right">+0,86</span></div>
<div class="t" style="left:431.1px;width:150px;text-align:right;top:150.39999999999998px;line-height:21.4px;font-size:9.8px;color:#3bd94f;"><span class="s" style="transform:scaleX(0.87);transform-origin:right">+1,22%</span></div>
<div class="t" style="left:475.1px;width:150px;text-align:right;top:150.39999999999998px;line-height:21.4px;font-size:9.8px;"><span class="s" style="transform:scaleX(0.87);transform-origin:right">70,66</span></div>
<div class="t" style="left:519.1px;width:150px;text-align:right;top:150.39999999999998px;line-height:21.4px;font-size:9.8px;"><span class="s" style="transform:scaleX(0.87);transform-origin:right">71,24</span></div>
<div class="t" style="left:562.4px;width:150px;text-align:right;top:150.39999999999998px;line-height:21.4px;font-size:9.8px;"><span class="s" style="transform:scaleX(0.87);transform-origin:right">70,08</span></div>
<div class="t" style="left:606.0px;width:150px;text-align:right;top:150.39999999999998px;line-height:21.4px;font-size:9.8px;"><span class="s" style="transform:scaleX(0.87);transform-origin:right">70,30</span></div>
<div class="t" style="left:650.0px;width:150px;text-align:right;top:150.39999999999998px;line-height:21.4px;font-size:9.8px;"><span class="s" style="transform:scaleX(0.87);transform-origin:right">150 Tsd.</span></div>
<svg class="ab" style="left:10px;top:177px" width="4" height="9" viewBox="0 0 4 9"><rect x="0.3" y="0.7" width="1.9" height="1.9" fill="#cfd3d4"/><rect x="0.3" y="3.7" width="1.9" height="1.9" fill="#cfd3d4"/><rect x="0.3" y="6.7" width="1.9" height="1.9" fill="#cfd3d4"/></svg>
<div class="t" style="left:27px;top:171.79999999999995px;line-height:21.4px;font-size:9.8px;"><span class="s" style="transform:scaleX(0.87);transform-origin:left">CBK100</span></div>
<div class="t" style="left:77.7px;top:171.79999999999995px;line-height:21.4px;font-size:9.8px;"><span class="s" style="transform:scaleX(0.87);transform-origin:left">DE000CBK1001</span></div>
<div class="t" style="left:158px;top:171.79999999999995px;line-height:21.4px;font-size:9.8px;"><span class="s" style="transform:scaleX(0.87);transform-origin:left">COMMERZBAN...</span></div>
<div class="t" style="left:238px;top:171.79999999999995px;line-height:21.4px;font-size:9.8px;"><span class="s" style="transform:scaleX(0.87);transform-origin:left">EUR</span></div>
<svg class="ab" style="left:289.2px;top:175.29999999999995px" width="12" height="12" viewBox="0 0 12 12"><circle cx="6" cy="6" r="5.4" fill="#3ddc5c"/><path d="M3.6,8.4 L8,4 M4.9,3.7 L8.3,3.7 L8.3,7.1" fill="none" stroke="#0b2a1a" stroke-width="1.1"/></svg>
<div class="t" style="left:321.2px;top:171.79999999999995px;line-height:21.4px;font-size:9.8px;"><span class="s" style="transform:scaleX(0.87);transform-origin:left">Xetra</span></div>
<div class="t" style="left:321.8px;width:150px;text-align:center;top:171.79999999999995px;line-height:21.4px;font-size:9.8px;"><span class="s" style="transform:scaleX(0.87);transform-origin:center">17:20:25</span></div>
<div class="t" style="left:329.6px;width:150px;text-align:right;top:171.79999999999995px;line-height:21.4px;font-size:9.8px;"><span class="s" style="transform:scaleX(0.87);transform-origin:right">10,925</span></div>
<div class="t" style="left:380.4px;width:150px;text-align:right;top:171.79999999999995px;line-height:21.4px;font-size:9.8px;color:#3bd94f;"><span class="s" style="transform:scaleX(0.87);transform-origin:right">+0,05</span></div>
<div class="t" style="left:431.1px;width:150px;text-align:right;top:171.79999999999995px;line-height:21.4px;font-size:9.8px;color:#3bd94f;"><span class="s" style="transform:scaleX(0.87);transform-origin:right">+0,41%</span></div>
<div class="t" style="left:475.1px;width:150px;text-align:right;top:171.79999999999995px;line-height:21.4px;font-size:9.8px;"><span class="s" style="transform:scaleX(0.87);transform-origin:right">10,95</span></div>
<div class="t" style="left:519.1px;width:150px;text-align:right;top:171.79999999999995px;line-height:21.4px;font-size:9.8px;"><span class="s" style="transform:scaleX(0.87);transform-origin:right">10,98</span></div>
<div class="t" style="left:562.4px;width:150px;text-align:right;top:171.79999999999995px;line-height:21.4px;font-size:9.8px;"><span class="s" style="transform:scaleX(0.87);transform-origin:right">10,805</span></div>
<div class="t" style="left:606.0px;width:150px;text-align:right;top:171.79999999999995px;line-height:21.4px;font-size:9.8px;"><span class="s" style="transform:scaleX(0.87);transform-origin:right">10,88</span></div>
<div class="t" style="left:650.0px;width:150px;text-align:right;top:171.79999999999995px;line-height:21.4px;font-size:9.8px;"><span class="s" style="transform:scaleX(0.87);transform-origin:right">6 Mio.</span></div>
<svg class="ab" style="left:10px;top:199px" width="4" height="9" viewBox="0 0 4 9"><rect x="0.3" y="0.7" width="1.9" height="1.9" fill="#cfd3d4"/><rect x="0.3" y="3.7" width="1.9" height="1.9" fill="#cfd3d4"/><rect x="0.3" y="6.7" width="1.9" height="1.9" fill="#cfd3d4"/></svg>
<div class="t" style="left:27px;top:193.2px;line-height:21.4px;font-size:9.8px;"><span class="s" style="transform:scaleX(0.87);transform-origin:left">543900</span></div>
<div class="t" style="left:77.7px;top:193.2px;line-height:21.4px;font-size:9.8px;"><span class="s" style="transform:scaleX(0.87);transform-origin:left">DE0005439004</span></div>
<div class="t" style="left:158px;top:193.2px;line-height:21.4px;font-size:9.8px;"><span class="s" style="transform:scaleX(0.87);transform-origin:left">CONTINENTAL ...</span></div>
<div class="t" style="left:238px;top:193.2px;line-height:21.4px;font-size:9.8px;"><span class="s" style="transform:scaleX(0.87);transform-origin:left">EUR</span></div>
<svg class="ab" style="left:289.2px;top:196.7px" width="12" height="12" viewBox="0 0 12 12"><circle cx="6" cy="6" r="5.4" fill="#3ddc5c"/><path d="M3.6,8.4 L8,4 M4.9,3.7 L8.3,3.7 L8.3,7.1" fill="none" stroke="#0b2a1a" stroke-width="1.1"/></svg>
<div class="t" style="left:321.2px;top:193.2px;line-height:21.4px;font-size:9.8px;"><span class="s" style="transform:scaleX(0.87);transform-origin:left">Xetra</span></div>
<div class="t" style="left:321.8px;width:150px;text-align:center;top:193.2px;line-height:21.4px;font-size:9.8px;"><span class="s" style="transform:scaleX(0.87);transform-origin:center">17:20:25</span></div>
<div class="t" style="left:329.6px;width:150px;text-align:right;top:193.2px;line-height:21.4px;font-size:9.8px;"><span class="s" style="transform:scaleX(0.87);transform-origin:right">70,00</span></div>
<div class="t" style="left:380.4px;width:150px;text-align:right;top:193.2px;line-height:21.4px;font-size:9.8px;color:#3bd94f;"><span class="s" style="transform:scaleX(0.87);transform-origin:right">+1,32</span></div>
<div class="t" style="left:431.1px;width:150px;text-align:right;top:193.2px;line-height:21.4px;font-size:9.8px;color:#3bd94f;"><span class="s" style="transform:scaleX(0.87);transform-origin:right">+1,92%</span></div>
<div class="t" style="left:475.1px;width:150px;text-align:right;top:193.2px;line-height:21.4px;font-size:9.8px;"><span class="s" style="transform:scaleX(0.87);transform-origin:right">69,00</span></div>
<div class="t" style="left:519.1px;width:150px;text-align:right;top:193.2px;line-height:21.4px;font-size:9.8px;"><span class="s" style="transform:scaleX(0.87);transform-origin:right">71,08</span></div>
<div class="t" style="left:562.4px;width:150px;text-align:right;top:193.2px;line-height:21.4px;font-size:9.8px;"><span class="s" style="transform:scaleX(0.87);transform-origin:right">67,22</span></div>
<div class="t" style="left:606.0px;width:150px;text-align:right;top:193.2px;line-height:21.4px;font-size:9.8px;"><span class="s" style="transform:scaleX(0.87);transform-origin:right">68,68</span></div>
<div class="t" style="left:650.0px;width:150px;text-align:right;top:193.2px;line-height:21.4px;font-size:9.8px;"><span class="s" style="transform:scaleX(0.87);transform-origin:right">537 Tsd.</span></div>
<div class="ab" style="left:425.7px;top:215.40000000000003px;width:58px;height:17px;background:#283a42;"></div>
<svg class="ab" style="left:10px;top:220px" width="4" height="9" viewBox="0 0 4 9"><rect x="0.3" y="0.7" width="1.9" height="1.9" fill="#cfd3d4"/><rect x="0.3" y="3.7" width="1.9" height="1.9" fill="#cfd3d4"/><rect x="0.3" y="6.7" width="1.9" height="1.9" fill="#cfd3d4"/></svg>
<div class="t" style="left:27px;top:214.60000000000002px;line-height:21.4px;font-size:9.8px;"><span class="s" style="transform:scaleX(0.87);transform-origin:left">606214</span></div>
<div class="t" style="left:77.7px;top:214.60000000000002px;line-height:21.4px;font-size:9.8px;"><span class="s" style="transform:scaleX(0.87);transform-origin:left">DE0006062144</span></div>
<div class="t" style="left:158px;top:214.60000000000002px;line-height:21.4px;font-size:9.8px;"><span class="s" style="transform:scaleX(0.87);transform-origin:left">COVESTRO AG ...</span></div>
<div class="t" style="left:238px;top:214.60000000000002px;line-height:21.4px;font-size:9.8px;"><span class="s" style="transform:scaleX(0.87);transform-origin:left">EUR</span></div>
<svg class="ab" style="left:289.2px;top:218.10000000000002px" width="12" height="12" viewBox="0 0 12 12"><circle cx="6" cy="6" r="5.4" fill="#3ddc5c"/><path d="M3.6,8.4 L8,4 M4.9,3.7 L8.3,3.7 L8.3,7.1" fill="none" stroke="#0b2a1a" stroke-width="1.1"/></svg>
<div class="t" style="left:321.2px;top:214.60000000000002px;line-height:21.4px;font-size:9.8px;"><span class="s" style="transform:scaleX(0.87);transform-origin:left">Xetra</span></div>
<div class="t" style="left:321.8px;width:150px;text-align:center;top:214.60000000000002px;line-height:21.4px;font-size:9.8px;"><span class="s" style="transform:scaleX(0.87);transform-origin:center">17:20:35</span></div>
<div class="t" style="left:329.6px;width:150px;text-align:right;top:214.60000000000002px;line-height:21.4px;font-size:9.8px;"><span class="s" style="transform:scaleX(0.87);transform-origin:right">48,35</span></div>
<div class="t" style="left:380.4px;width:150px;text-align:right;top:214.60000000000002px;line-height:21.4px;font-size:9.8px;color:#3bd94f;"><span class="s" style="transform:scaleX(0.87);transform-origin:right">+0,87</span></div>
<div class="t" style="left:431.1px;width:150px;text-align:right;top:214.60000000000002px;line-height:21.4px;font-size:9.8px;color:#3bd94f;"><span class="s" style="transform:scaleX(0.87);transform-origin:right">+1,83%</span></div>
<div class="t" style="left:475.1px;width:150px;text-align:right;top:214.60000000000002px;line-height:21.4px;font-size:9.8px;"><span class="s" style="transform:scaleX(0.87);transform-origin:right">47,46</span></div>
<div class="t" style="left:519.1px;width:150px;text-align:right;top:214.60000000000002px;line-height:21.4px;font-size:9.8px;"><span class="s" style="transform:scaleX(0.87);transform-origin:right">48,35</span></div>
<div class="t" style="left:562.4px;width:150px;text-align:right;top:214.60000000000002px;line-height:21.4px;font-size:9.8px;"><span class="s" style="transform:scaleX(0.87);transform-origin:right">47,17</span></div>
<div class="t" style="left:606.0px;width:150px;text-align:right;top:214.60000000000002px;line-height:21.4px;font-size:9.8px;"><span class="s" style="transform:scaleX(0.87);transform-origin:right">47,48</span></div>
<div class="t" style="left:650.0px;width:150px;text-align:right;top:214.60000000000002px;line-height:21.4px;font-size:9.8px;"><span class="s" style="transform:scaleX(0.87);transform-origin:right">346 Tsd.</span></div>
<svg class="ab" style="left:10px;top:241px" width="4" height="9" viewBox="0 0 4 9"><rect x="0.3" y="0.7" width="1.9" height="1.9" fill="#cfd3d4"/><rect x="0.3" y="3.7" width="1.9" height="1.9" fill="#cfd3d4"/><rect x="0.3" y="6.7" width="1.9" height="1.9" fill="#cfd3d4"/></svg>
<div class="t" style="left:27px;top:236.0px;line-height:21.4px;font-size:9.8px;"><span class="s" style="transform:scaleX(0.87);transform-origin:left">DTR0CK</span></div>
<div class="t" style="left:77.7px;top:236.0px;line-height:21.4px;font-size:9.8px;"><span class="s" style="transform:scaleX(0.87);transform-origin:left">DE000DTR0CK8</span></div>
<div class="t" style="left:158px;top:236.0px;line-height:21.4px;font-size:9.8px;"><span class="s" style="transform:scaleX(0.87);transform-origin:left">DAIMLER TRUC...</span></div>
<div class="t" style="left:238px;top:236.0px;line-height:21.4px;font-size:9.8px;"><span class="s" style="transform:scaleX(0.87);transform-origin:left">EUR</span></div>
<svg class="ab" style="left:289.2px;top:239.5px" width="12" height="12" viewBox="0 0 12 12"><circle cx="6" cy="6" r="5.4" fill="#3ddc5c"/><path d="M3.6,8.4 L8,4 M4.9,3.7 L8.3,3.7 L8.3,7.1" fill="none" stroke="#0b2a1a" stroke-width="1.1"/></svg>
<div class="t" style="left:321.2px;top:236.0px;line-height:21.4px;font-size:9.8px;"><span class="s" style="transform:scaleX(0.87);transform-origin:left">Xetra</span></div>
<div class="t" style="left:321.8px;width:150px;text-align:center;top:236.0px;line-height:21.4px;font-size:9.8px;"><span class="s" style="transform:scaleX(0.87);transform-origin:center">17:20:35</span></div>
<div class="t" style="left:329.6px;width:150px;text-align:right;top:236.0px;line-height:21.4px;font-size:9.8px;"><span class="s" style="transform:scaleX(0.87);transform-origin:right">33,14</span></div>
<div class="t" style="left:380.4px;width:150px;text-align:right;top:236.0px;line-height:21.4px;font-size:9.8px;color:#3bd94f;"><span class="s" style="transform:scaleX(0.87);transform-origin:right">+0,45</span></div>
<div class="t" style="left:431.1px;width:150px;text-align:right;top:236.0px;line-height:21.4px;font-size:9.8px;color:#3bd94f;"><span class="s" style="transform:scaleX(0.87);transform-origin:right">+1,38%</span></div>
<div class="t" style="left:475.1px;width:150px;text-align:right;top:236.0px;line-height:21.4px;font-size:9.8px;"><span class="s" style="transform:scaleX(0.87);transform-origin:right">32,75</span></div>
<div class="t" style="left:519.1px;width:150px;text-align:right;top:236.0px;line-height:21.4px;font-size:9.8px;"><span class="s" style="transform:scaleX(0.87);transform-origin:right">33,22</span></div>
<div class="t" style="left:562.4px;width:150px;text-align:right;top:236.0px;line-height:21.4px;font-size:9.8px;"><span class="s" style="transform:scaleX(0.87);transform-origin:right">32,72</span></div>
<div class="t" style="left:606.0px;width:150px;text-align:right;top:236.0px;line-height:21.4px;font-size:9.8px;"><span class="s" style="transform:scaleX(0.87);transform-origin:right">32,69</span></div>
<div class="t" style="left:650.0px;width:150px;text-align:right;top:236.0px;line-height:21.4px;font-size:9.8px;"><span class="s" style="transform:scaleX(0.87);transform-origin:right">947 Tsd.</span></div>
<svg class="ab" style="left:10px;top:263px" width="4" height="9" viewBox="0 0 4 9"><rect x="0.3" y="0.7" width="1.9" height="1.9" fill="#cfd3d4"/><rect x="0.3" y="3.7" width="1.9" height="1.9" fill="#cfd3d4"/><rect x="0.3" y="6.7" width="1.9" height="1.9" fill="#cfd3d4"/></svg>
<div class="t" style="left:27px;top:257.4px;line-height:21.4px;font-size:9.8px;"><span class="s" style="transform:scaleX(0.87);transform-origin:left">514000</span></div>
<div class="t" style="left:77.7px;top:257.4px;line-height:21.4px;font-size:9.8px;"><span class="s" style="transform:scaleX(0.87);transform-origin:left">DE0005140008</span></div>
<div class="t" style="left:158px;top:257.4px;line-height:21.4px;font-size:9.8px;"><span class="s" style="transform:scaleX(0.87);transform-origin:left">DEUTSCHE BA...</span></div>
<div class="t" style="left:238px;top:257.4px;line-height:21.4px;font-size:9.8px;"><span class="s" style="transform:scaleX(0.87);transform-origin:left">EUR</span></div>
<svg class="ab" style="left:289.2px;top:260.9px" width="12" height="12" viewBox="0 0 12 12"><circle cx="6" cy="6" r="5.3" fill="#d5393b"/><path d="M3.6,3.6 L8,8 M4.9,8.3 L8.3,8.3 L8.3,4.9" fill="none" stroke="#2a0a0c" stroke-width="1.1"/></svg>
<div class="t" style="left:321.2px;top:257.4px;line-height:21.4px;font-size:9.8px;"><span class="s" style="transform:scaleX(0.87);transform-origin:left">Xetra</span></div>
<div class="t" style="left:321.8px;width:150px;text-align:center;top:257.4px;line-height:21.4px;font-size:9.8px;"><span class="s" style="transform:scaleX(0.87);transform-origin:center">17:20:34</span></div>
<div class="t" style="left:329.6px;width:150px;text-align:right;top:257.4px;line-height:21.4px;font-size:9.8px;"><span class="s" style="transform:scaleX(0.87);transform-origin:right">9,446</span></div>
<div class="t" style="left:380.4px;width:150px;text-align:right;top:257.4px;line-height:21.4px;font-size:9.8px;color:#cf3a3e;"><span class="s" style="transform:scaleX(0.87);transform-origin:right">-0,03</span></div>
<div class="t" style="left:431.1px;width:150px;text-align:right;top:257.4px;line-height:21.4px;font-size:9.8px;color:#cf3a3e;"><span class="s" style="transform:scaleX(0.87);transform-origin:right">-0,33%</span></div>
<div class="t" style="left:475.1px;width:150px;text-align:right;top:257.4px;line-height:21.4px;font-size:9.8px;"><span class="s" style="transform:scaleX(0.87);transform-origin:right">9,41</span></div>
<div class="t" style="left:519.1px;width:150px;text-align:right;top:257.4px;line-height:21.4px;font-size:9.8px;"><span class="s" style="transform:scaleX(0.87);transform-origin:right">9,462</span></div>
<div class="t" style="left:562.4px;width:150px;text-align:right;top:257.4px;line-height:21.4px;font-size:9.8px;"><span class="s" style="transform:scaleX(0.87);transform-origin:right">9,259</span></div>
<div class="t" style="left:606.0px;width:150px;text-align:right;top:257.4px;line-height:21.4px;font-size:9.8px;"><span class="s" style="transform:scaleX(0.87);transform-origin:right">9,477</span></div>
<div class="t" style="left:650.0px;width:150px;text-align:right;top:257.4px;line-height:21.4px;font-size:9.8px;"><span class="s" style="transform:scaleX(0.87);transform-origin:right">10 Mio.</span></div>
<svg class="ab" style="left:10px;top:284px" width="4" height="9" viewBox="0 0 4 9"><rect x="0.3" y="0.7" width="1.9" height="1.9" fill="#cfd3d4"/><rect x="0.3" y="3.7" width="1.9" height="1.9" fill="#cfd3d4"/><rect x="0.3" y="6.7" width="1.9" height="1.9" fill="#cfd3d4"/></svg>
<div class="t" style="left:27px;top:278.79999999999995px;line-height:21.4px;font-size:9.8px;"><span class="s" style="transform:scaleX(0.87);transform-origin:left">581005</span></div>
<div class="t" style="left:77.7px;top:278.79999999999995px;line-height:21.4px;font-size:9.8px;"><span class="s" style="transform:scaleX(0.87);transform-origin:left">DE0005810055</span></div>
<div class="t" style="left:158px;top:278.79999999999995px;line-height:21.4px;font-size:9.8px;"><span class="s" style="transform:scaleX(0.87);transform-origin:left">DEUTSCHE BO...</span></div>
<div class="t" style="left:238px;top:278.79999999999995px;line-height:21.4px;font-size:9.8px;"><span class="s" style="transform:scaleX(0.87);transform-origin:left">EUR</span></div>
<svg class="ab" style="left:289.2px;top:282.29999999999995px" width="12" height="12" viewBox="0 0 12 12"><circle cx="6" cy="6" r="5.4" fill="#3ddc5c"/><path d="M3.6,8.4 L8,4 M4.9,3.7 L8.3,3.7 L8.3,7.1" fill="none" stroke="#0b2a1a" stroke-width="1.1"/></svg>
<div class="t" style="left:321.2px;top:278.79999999999995px;line-height:21.4px;font-size:9.8px;"><span class="s" style="transform:scaleX(0.87);transform-origin:left">Xetra</span></div>
<div class="t" style="left:321.8px;width:150px;text-align:center;top:278.79999999999995px;line-height:21.4px;font-size:9.8px;"><span class="s" style="transform:scaleX(0.87);transform-origin:center">17:20:25</span></div>
<div class="t" style="left:329.6px;width:150px;text-align:right;top:278.79999999999995px;line-height:21.4px;font-size:9.8px;"><span class="s" style="transform:scaleX(0.87);transform-origin:right">162,75</span></div>
<div class="t" style="left:380.4px;width:150px;text-align:right;top:278.79999999999995px;line-height:21.4px;font-size:9.8px;color:#3bd94f;"><span class="s" style="transform:scaleX(0.87);transform-origin:right">+2,90</span></div>
<div class="t" style="left:431.1px;width:150px;text-align:right;top:278.79999999999995px;line-height:21.4px;font-size:9.8px;color:#3bd94f;"><span class="s" style="transform:scaleX(0.87);transform-origin:right">+1,81%</span></div>
<div class="t" style="left:475.1px;width:150px;text-align:right;top:278.79999999999995px;line-height:21.4px;font-size:9.8px;"><span class="s" style="transform:scaleX(0.87);transform-origin:right">160,15</span></div>
<div class="t" style="left:519.1px;width:150px;text-align:right;top:278.79999999999995px;line-height:21.4px;font-size:9.8px;"><span class="s" style="transform:scaleX(0.87);transform-origin:right">163,15</span></div>
<div class="t" style="left:562.4px;width:150px;text-align:right;top:278.79999999999995px;line-height:21.4px;font-size:9.8px;"><span class="s" style="transform:scaleX(0.87);transform-origin:right">159,85</span></div>
<div class="t" style="left:606.0px;width:150px;text-align:right;top:278.79999999999995px;line-height:21.4px;font-size:9.8px;"><span class="s" style="transform:scaleX(0.87);transform-origin:right">159,85</span></div>
<div class="t" style="left:650.0px;width:150px;text-align:right;top:278.79999999999995px;line-height:21.4px;font-size:9.8px;"><span class="s" style="transform:scaleX(0.87);transform-origin:right">245 Tsd.</span></div>
<svg class="ab" style="left:10px;top:306px" width="4" height="9" viewBox="0 0 4 9"><rect x="0.3" y="0.7" width="1.9" height="1.9" fill="#cfd3d4"/><rect x="0.3" y="3.7" width="1.9" height="1.9" fill="#cfd3d4"/><rect x="0.3" y="6.7" width="1.9" height="1.9" fill="#cfd3d4"/></svg>
<div class="t" style="left:27px;top:300.19999999999993px;line-height:21.4px;font-size:9.8px;"><span class="s" style="transform:scaleX(0.87);transform-origin:left">555200</span></div>
<div class="t" style="left:77.7px;top:300.19999999999993px;line-height:21.4px;font-size:9.8px;"><span class="s" style="transform:scaleX(0.87);transform-origin:left">DE0005552004</span></div>
<div class="t" style="left:158px;top:300.19999999999993px;line-height:21.4px;font-size:9.8px;"><span class="s" style="transform:scaleX(0.87);transform-origin:left">DEUTSCHE PO...</span></div>
<div class="t" style="left:238px;top:300.19999999999993px;line-height:21.4px;font-size:9.8px;"><span class="s" style="transform:scaleX(0.87);transform-origin:left">EUR</span></div>
<svg class="ab" style="left:289.2px;top:303.69999999999993px" width="12" height="12" viewBox="0 0 12 12"><circle cx="6" cy="6" r="5.4" fill="#3ddc5c"/><path d="M3.6,8.4 L8,4 M4.9,3.7 L8.3,3.7 L8.3,7.1" fill="none" stroke="#0b2a1a" stroke-width="1.1"/></svg>
<div class="t" style="left:321.2px;top:300.19999999999993px;line-height:21.4px;font-size:9.8px;"><span class="s" style="transform:scaleX(0.87);transform-origin:left">Xetra</span></div>
<div class="t" style="left:321.8px;width:150px;text-align:center;top:300.19999999999993px;line-height:21.4px;font-size:9.8px;"><span class="s" style="transform:scaleX(0.87);transform-origin:center">17:20:31</span></div>
<div class="t" style="left:329.6px;width:150px;text-align:right;top:300.19999999999993px;line-height:21.4px;font-size:9.8px;"><span class="s" style="transform:scaleX(0.87);transform-origin:right">45,52</span></div>
<div class="t" style="left:380.4px;width:150px;text-align:right;top:300.19999999999993px;line-height:21.4px;font-size:9.8px;color:#3bd94f;"><span class="s" style="transform:scaleX(0.87);transform-origin:right">+1,02</span></div>
<div class="t" style="left:431.1px;width:150px;text-align:right;top:300.19999999999993px;line-height:21.4px;font-size:9.8px;color:#3bd94f;"><span class="s" style="transform:scaleX(0.87);transform-origin:right">+2,28%</span></div>
<div class="t" style="left:475.1px;width:150px;text-align:right;top:300.19999999999993px;line-height:21.4px;font-size:9.8px;"><span class="s" style="transform:scaleX(0.87);transform-origin:right">44,725</span></div>
<div class="t" style="left:519.1px;width:150px;text-align:right;top:300.19999999999993px;line-height:21.4px;font-size:9.8px;"><span class="s" style="transform:scaleX(0.87);transform-origin:right">45,65</span></div>
<div class="t" style="left:562.4px;width:150px;text-align:right;top:300.19999999999993px;line-height:21.4px;font-size:9.8px;"><span class="s" style="transform:scaleX(0.87);transform-origin:right">44,405</span></div>
<div class="t" style="left:606.0px;width:150px;text-align:right;top:300.19999999999993px;line-height:21.4px;font-size:9.8px;"><span class="s" style="transform:scaleX(0.87);transform-origin:right">44,505</span></div>
<div class="t" style="left:650.0px;width:150px;text-align:right;top:300.19999999999993px;line-height:21.4px;font-size:9.8px;"><span class="s" style="transform:scaleX(0.87);transform-origin:right">1 Mio.</span></div>
</div>
<div class="ab" style="left:815px;top:143.5px;width:7px;height:315px;box-sizing:border-box;border-left:1px solid #3b4449;border-right:1px solid #3b4449;"></div>
<div class="ab" style="left:815.3px;top:143.5px;width:6.4px;height:116.3px;border-radius:3px;background:#8e8f90;"></div>
<div class="t" style="left:16.6px;top:461.5px;font-size:8.4px;line-height:11px;color:#7f888c;"><span class="s" style="transform:scaleX(.93);transform-origin:left">Echtzeit | Aktualisiert: 12.07.2023, 17:20:37</span></div>
<svg class="ab" style="left:805px;top:462px" width="12" height="6" viewBox="0 0 12 6"><rect x="0.8" y="0.8" width="5.2" height="4.4" rx="2.2" fill="none" stroke="#1793c9" stroke-width="1.3"/><rect x="5.6" y="0.8" width="5.2" height="4.4" rx="2.2" fill="none" stroke="#1793c9" stroke-width="1.3"/></svg>
<div class="ab" style="left:7px;top:42.5px;width:251px;height:212.5px;box-shadow:0 2px 5px 1px rgba(45,70,80,0.6);"></div>
<svg class="ab" style="left:7px;top:36.5px" width="252" height="220" viewBox="0 0 252 220"><path d="M0.5,6 L5.8,6 L11.5,0.6 L17.2,6 L250.5,6 L250.5,218.2 L0.5,218.2 Z" fill="#03090c" stroke="#0b3244" stroke-width="1"/><path d="M6.2,6.4 L11.5,1.2 L16.8,6.4 Z" fill="#052431"/></svg>
<div class="t" style="left:62.5px;top:50px;font-size:11.6px;line-height:14px;color:#c9cbcc;"><span class="s" style="transform:scaleX(.98);transform-origin:left">IHRE PRODUKTAUSWAHL</span></div>
<div class="tile tb" style="left:15.2px;top:71.2px;"><div class="tl" style="top:7px;font-size:22px;line-height:24px;font-weight:bold;color:#e6f3f8;"><span class="s" style="transform:scaleX(.95)">IM</span></div><div class="tl" style="top:36.5px">INVESTMENT</div><div class="tl" style="top:44.5px">MANAGER</div></div>
<div class="tile tb" style="left:75.9px;top:71.2px;"><svg class="ab" style="left:0;top:0" width="54" height="54" viewBox="0 0 54 54"><path d="M32.7,13.6 L32.7,12.2 L28.6,8 L18,8 Q16.9,8 16.9,9.1 L16.9,27.2 Q16.9,28.3 18,28.3 L31.6,28.3 Q32.7,28.3 32.7,27.2 L32.7,24.3" fill="none" stroke="#e6f3f8" stroke-width="1.2"/><path d="M28.2,8.2 L28.2,12.4 L32.5,12.4 Z" fill="#e6f3f8"/><g stroke="#e6f3f8" stroke-width="1"><line x1="19.5" y1="12.3" x2="23.7" y2="12.3"/><line x1="19.5" y1="14.1" x2="23.7" y2="14.1"/><line x1="19.5" y1="17.4" x2="23.7" y2="17.4"/><line x1="19.5" y1="19.1" x2="23.7" y2="19.1"/><line x1="19.5" y1="21.1" x2="23.7" y2="21.1"/><line x1="26.6" y1="17.4" x2="28.6" y2="17.4"/><line x1="26.6" y1="19.1" x2="28.6" y2="19.1"/><line x1="26.6" y1="21.1" x2="28.6" y2="21.1"/></g><circle cx="29.4" cy="18.9" r="4.9" fill="none" stroke="#e6f3f8" stroke-width="1.2"/><path d="M30.5,15.2 A3.7,3.7 0 0 1 30.5,22.6 Z" fill="#e6f3f8" opacity="0.8"/><line x1="32.9" y1="22.4" x2="36.6" y2="26" stroke="#e6f3f8" stroke-width="1.8" stroke-linecap="round"/><line x1="24.5" y1="24.6" x2="26.2" y2="24.6" stroke="#e6f3f8" stroke-width="1"/></svg><div class="tl" style="top:36.5px">DOCUMENT-</div><div class="tl" style="top:44.5px">HUB</div></div>
<div class="tile tb" style="left:136.6px;top:71.2px;"><svg class="ab" style="left:0;top:0" width="54" height="54" viewBox="0 0 54 54"><path d="M21.5,14.6 A5.3,5.3 0 1 1 30.4,19.6 Q26.4,22.2 26.4,24.1" fill="none" stroke="#e6f3f8" stroke-width="2.6" stroke-linecap="round"/><circle cx="26.5" cy="28.8" r="1.95" fill="#e6f3f8"/></svg><div class="tl" style="top:41.89999999999999px">HELP CENTER</div></div>
<div class="tile tg" style="left:197.3px;top:71.2px;"><svg class="ab" style="left:0;top:0" width="54" height="54" viewBox="0 0 54 54"><g fill="none" stroke="#9ba1a4" stroke-width="1.25"><rect x="15.5" y="6.6" width="8.8" height="6.9" rx="1.2"/><rect x="15.5" y="16.3" width="6.7" height="3.8" rx="1.2"/><rect x="23.3" y="16.3" width="6.7" height="3.8" rx="1.2"/><rect x="31.1" y="16.3" width="7" height="3.8" rx="1.2"/><rect x="15.5" y="23.3" width="22.6" height="5.8" rx="1.2"/></g><g stroke="#9ba1a4" stroke-width="1.1"><line x1="26.7" y1="7.9" x2="38.4" y2="7.9"/><line x1="26.7" y1="10.3" x2="38.4" y2="10.3"/><line x1="26.7" y1="12.7" x2="38.4" y2="12.7"/></g></svg><div class="tl" style="top:36.5px">TEMPLATE</div><div class="tl" style="top:44.5px">MANAGER</div></div>
<div class="tile tg" style="left:15.2px;top:132.6px;"><svg class="ab" style="left:0;top:0" width="54" height="54" viewBox="0 0 54 54"><rect x="27.3" y="8" width="6.6" height="4" fill="#9ba1a4"/><rect x="27.3" y="8" width="1.7" height="7" fill="#9ba1a4"/><path d="M15.5,28.4 L15.5,18.3 A4,4 0 0 1 19.5,14.3 L34.5,14.3 A4,4 0 0 1 38.5,18.3 L38.5,28.4 Z" fill="#9ba1a4"/><path d="M17.6,26.6 L17.6,19.7 A3,3 0 0 1 23.6,19.7 L23.6,26.6 Z" fill="#161f24"/><rect x="31.9" y="28.3" width="2.3" height="3.5" fill="#9ba1a4"/></svg><div class="tl" style="top:42.000000000000014px">POSTBOX</div></div>
<div class="tile tg" style="left:75.9px;top:132.6px;"><svg class="ab" style="left:0;top:0" width="54" height="54" viewBox="0 0 54 54"><defs><pattern id="hs" width="4" height="2.2" patternUnits="userSpaceOnUse"><rect width="4" height="1.1" fill="#9ba1a4"/></pattern></defs><path d="M25.8,18.0 L20.64,8.29 A11.0,11.0 0 1 0 34.47,24.77 Z" fill="none" stroke="#9ba1a4" stroke-width="1.3" stroke-linejoin="round"/><path d="M25.9,16.0 L20.89,7.93 A11.2,11.2 0 0 1 30.36,7.77 Z" fill="none" stroke="#9ba1a4" stroke-width="1.2" stroke-linejoin="round"/><path d="M29.4,16.9 L33.05,7.90 A11.6,11.6 0 0 1 36.64,22.85 Z" fill="url(#hs)" stroke="#9ba1a4" stroke-width="1.1" stroke-linejoin="round"/><circle cx="24.5" cy="10.5" r="0.4" fill="#9ba1a4"/><circle cx="27" cy="10.5" r="0.4" fill="#9ba1a4"/><circle cx="25.8" cy="12.5" r="0.4" fill="#9ba1a4"/></svg><div class="tl" style="top:36.500000000000014px">PORTFOLIO</div><div class="tl" style="top:44.500000000000014px">ACCESS</div></div>
<div class="tile tg" style="left:136.6px;top:132.6px;"><svg class="ab" style="left:0;top:0" width="54" height="54" viewBox="0 0 54 54"><circle cx="26.9" cy="15.45" r="10.2" fill="none" stroke="#9ba1a4" stroke-width="1.25"/><g stroke="#9ba1a4" stroke-width="1.2"><line x1="26.9" y1="5.5" x2="26.9" y2="7.8"/><line x1="26.9" y1="25.4" x2="26.9" y2="23.1"/><line x1="16.9" y1="15.45" x2="19.2" y2="15.45"/><line x1="36.9" y1="15.45" x2="34.6" y2="15.45"/></g><circle cx="22.3" cy="11" r="1.7" fill="#9ba1a4"/><circle cx="31.5" cy="11" r="1.7" fill="#9ba1a4"/><path d="M20.2,16.6 L20.2,14.6 Q20.2,13 21.8,13 L24,13 L24,16.6 Z" fill="#9ba1a4"/><path d="M33.6,16.6 L33.6,14.6 Q33.6,13 32,13 L29.8,13 L29.8,16.6 Z" fill="#9ba1a4"/><circle cx="26.9" cy="13.6" r="2.65" fill="#9ba1a4" stroke="#161f24" stroke-width="0.6"/><path d="M22,21.3 L22,19.1 Q22,16.2 25,16.2 L28.8,16.2 Q31.8,16.2 31.8,19.1 L31.8,21.3 Z" fill="#9ba1a4" stroke="#161f24" stroke-width="0.8"/></svg><div class="tl" style="top:29.500000000000018px">TARGET</div><div class="tl" style="top:37.500000000000014px">MARKET</div><div class="tl" style="top:45.500000000000014px">SERVICE</div></div>
<div class="tile tg" style="left:197.3px;top:132.6px;"><svg class="ab" style="left:0;top:0" width="54" height="54" viewBox="0 0 54 54"><circle cx="28.9" cy="13.4" r="6.6" fill="#9ba1a4"/><path d="M31.6,10.3 A3.5,3.9 0 1 0 31.6,16.5" fill="none" stroke="#161f24" stroke-width="0.9"/><line x1="26.3" y1="12.5" x2="29.8" y2="12.5" stroke="#161f24" stroke-width="0.7"/><line x1="26.3" y1="14.3" x2="29.5" y2="14.3" stroke="#161f24" stroke-width="0.7"/><rect x="14.7" y="22" width="4.1" height="7.3" fill="#9ba1a4"/><path d="M19.6,22 L26.3,22 Q29.5,22.3 31.5,23.8 L36.8,23.4 Q38.8,23.4 38.5,24.5 Q35,27.8 31,28.9 L19.6,28.5 Z" fill="#9ba1a4"/><path d="M26.5,24.6 Q29.5,24.2 32.3,25.1" fill="none" stroke="#161f24" stroke-width="0.7"/></svg><div class="tl" style="top:36.500000000000014px">COSTS</div><div class="tl" style="top:44.500000000000014px">SERVICE</div></div>
<div class="tile tg" style="left:15.2px;top:194px;"><svg class="ab" style="left:0;top:0" width="54" height="54" viewBox="0 0 54 54"><path d="M19.2,25.3 A11.3,11.3 0 1 1 34.6,25.3" fill="none" stroke="#9ba1a4" stroke-width="1.3"/><g stroke="#9ba1a4" stroke-width="1.2"><line x1="26.9" y1="6.5" x2="26.9" y2="8.6"/><line x1="19" y1="9.7" x2="20.6" y2="11.3"/><line x1="34.8" y1="9.7" x2="33.2" y2="11.3"/><line x1="15.8" y1="17.6" x2="18" y2="17.6"/><line x1="38" y1="17.6" x2="35.8" y2="17.6"/></g><polygon points="26.5,9 27.3,9 28.3,19.3 25.5,19.3" fill="#9ba1a4"/><circle cx="26.9" cy="19.3" r="1.4" fill="#9ba1a4"/><text x="26.9" y="29.7" font-size="5.4" font-weight="bold" text-anchor="middle" fill="#9ba1a4" font-family="Liberation Sans" textLength="11.6" lengthAdjust="spacingAndGlyphs">RISK</text></svg><div class="tl" style="top:35.89999999999999px">PROFILING</div><div class="tl" style="top:43.89999999999999px">SERVICE</div></div>
<svg class="ab" style="left:96px;top:251px" width="12" height="17" viewBox="0 0 12 17"><path d="M1,1.5 L1,12.5 L3.7,10 L5.6,14.2 L7.3,13.4 L5.5,9.4 L8.9,9.4 Z" fill="#fff" stroke="#000" stroke-width="0.8"/></svg>
<svg class="ab" style="left:0;top:0" width="70" height="70" viewBox="0 0 70 70"><path d="M27,32 L51.6,42.2 L45.8,47.6 L53.2,55.5 A3,3 0 0 1 48.8,61.8 L39.4,53 L32.9,58 Z" fill="#f8b714" stroke="#f8b714" stroke-width="0.6" stroke-linejoin="round"/></svg>
</body></html>
